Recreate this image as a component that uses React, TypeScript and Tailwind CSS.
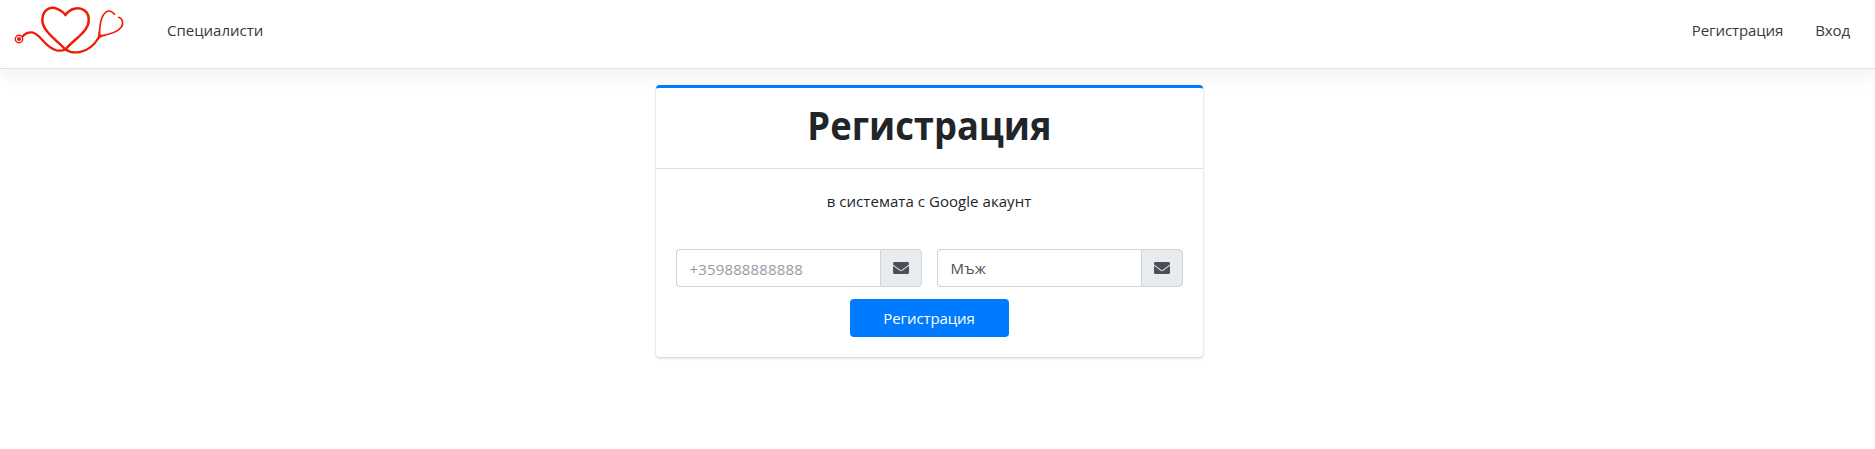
import { FaEnvelope } from "react-icons/fa";

function Logo() {
  return (
    <svg width="140" height="68" viewBox="0 0 140 68" fill="none" stroke="#ef1c05" strokeLinecap="round" strokeLinejoin="round">
      <circle cx="19" cy="39" r="3.7" strokeWidth="1.4" />
      <circle cx="19" cy="39" r="2.1" fill="#ef1c05" stroke="none" />
      <path strokeWidth="2.3" d="M22.5 36.5C25.500 33.200 28.500 32.200 32 32.400C40.500 33.200 44 47.500 56.500 50.300C60 51 63.500 50.400 65.400 49.500" />
      <path strokeWidth="2.5" d="M65.400 49.500C60 43.500 53 38.500 48 32.500C43.500 27.500 41.500 22 42.600 17C44.500 8 52 6.500 57 8.800C61 10.300 63.500 12 65.500 15.200C67.500 12 70 10 74 8.800C80 6.800 87.500 10 88.600 17.500C89.500 23.500 87 28.500 82.500 33C77.500 38.500 70 43.500 65.400 49.500" />
      <path strokeWidth="2.3" d="M65.400 49.500C69 52 75 53 80.500 51.800C89 50 95 44 98.800 37.500" />
      <path fill="#ef1c05" strokeWidth=".8" d="M98.100 39C98.300 34.500 98.800 32 99.300 31C99.800 33 100 34 100.300 35.300C101.500 35.200 103 35.100 105.500 35.700C102 36 100.500 37 98.100 39Z" />
      <path strokeWidth="1.700" d="M99.400 35C99.600 29 99.800 22 102.500 16.500C105 11.800 108 10.500 110.500 11.200C112.500 11.800 113.500 13 114.500 14.200" />
      <path strokeWidth="1.700" d="M100 36C108 34.800 117 32.500 121 27.500C124.200 23.200 122.500 18.500 118.800 17.300" />
    </svg>
  );
}

function Addon() {
  return (
    <span className="flex w-[42px] items-center justify-center rounded-r border border-[#ced4da] bg-[#e9ecef] text-[#495057]">
      <FaEnvelope size={16} />
    </span>
  );
}

export default function App() {
  return (
    <div className="min-h-[449px] bg-white font-['Open_Sans','Noto_Sans',sans-serif] text-base text-[#212529]">
      <nav className="flex h-[69px] items-start border-b border-[#dee2e6] bg-white text-[#343a40] shadow-[0_8px_16px_rgba(0,0,0,0.05)]">
        <Logo />
        <a href="#" className="ml-[27px] mt-[18px] text-[15px] leading-6">Специалисти</a>
        <div className="ml-auto mr-[25px] mt-[18px] flex gap-8 text-[15px] leading-6 tracking-[-0.1px]">
          <a href="#">Регистрация</a>
          <a href="#">Вход</a>
        </div>
      </nav>
      <main className="flex justify-center pt-4 pr-[17px]">
        <section className="h-[272px] w-[547px] rounded border-t-[3px] border-[#007bff] bg-white shadow-[0_0_1px_rgba(0,0,0,0.125),0_1px_3px_rgba(0,0,0,0.2)]">
          <header className="flex h-[81px] justify-center border-b border-[#dfdfdf] pt-2.5">
            <h1 className="scale-x-[0.908] text-[40px] font-bold leading-[54px]">Регистрация</h1>
          </header>
          <form className="px-5">
            <p className="pt-5 text-center text-[15px] leading-6 tracking-[0.05px]">в системата с Google акаунт</p>
            <div className="mt-9 flex gap-[15px]">
              <div className="flex h-[38px] flex-1">
                <input type="text" placeholder="+359888888888" className="w-0 flex-1 rounded-l border border-r-0 border-[#ced4da] px-[13px] pt-0.5 text-[15px] tracking-[0.15px] placeholder:text-[#939ba2]" />
                <Addon />
              </div>
              <div className="flex h-[38px] flex-1">
                <div className="flex w-0 flex-1 items-center rounded-l border border-r-0 border-[#ced4da] px-[13px] text-[15px] tracking-[0.2px] text-[#495057]">Мъж</div>
                <Addon />
              </div>
            </div>
            <div className="mt-3 flex justify-center">
              <button type="button" className="h-[38px] w-[159px] rounded bg-[#007bff] text-[15px] tracking-[-0.1px] text-white">Регистрация</button>
            </div>
          </form>
        </section>
      </main>
    </div>
  );
}
